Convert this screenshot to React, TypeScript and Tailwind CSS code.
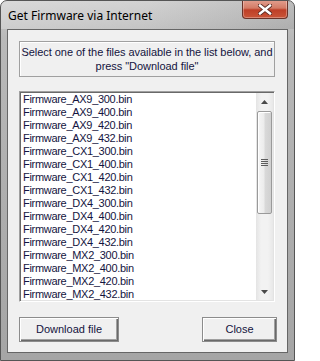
import React from "react"

const files = [
    "Firmware_AX9_300.bin",
    "Firmware_AX9_400.bin",
    "Firmware_AX9_420.bin",
    "Firmware_AX9_432.bin",
    "Firmware_CX1_300.bin",
    "Firmware_CX1_400.bin",
    "Firmware_CX1_420.bin",
    "Firmware_CX1_432.bin",
    "Firmware_DX4_300.bin",
    "Firmware_DX4_400.bin",
    "Firmware_DX4_420.bin",
    "Firmware_DX4_432.bin",
    "Firmware_MX2_300.bin",
    "Firmware_MX2_400.bin",
    "Firmware_MX2_420.bin",
    "Firmware_MX2_432.bin",
]

const ui = { fontFamily: '"Liberation Sans", Arial, sans-serif' }

function CloseGlyph() {
    return (
        <svg width="14" height="11" viewBox="0 0 14 11">
            <path d="M2 1.5 L12 9.5 M12 1.5 L2 9.5" stroke="#5a2a22" strokeWidth="4.2" strokeLinecap="square" />
            <path d="M2 1.5 L12 9.5 M12 1.5 L2 9.5" stroke="#ffffff" strokeWidth="2.4" strokeLinecap="square" />
        </svg>
    )
}

function Arrow({ down }: { down?: boolean }) {
    return (
        <svg width="7" height="4" viewBox="0 0 7 4">
            <path d={down ? "M0 0 H7 L3.5 4 Z" : "M0 4 H7 L3.5 0 Z"} fill="#4a4a4a" />
        </svg>
    )
}

function ClassicButton({ label, width }: { label: string; width: string }) {
    return (
        <button
            className={`${width} h-[25px] border border-[#8c8c8c] bg-[#f0f0f0] text-[11px] text-[#141440] shadow-[inset_1px_1px_0_#ffffff,inset_-1px_-1px_0_#696969,inset_-2px_-2px_0_#a0a0a0]`}
            style={ui}
        >
            {label}
        </button>
    )
}

export default function App() {
    return (
        <div className="w-[295px] h-[361px] flex flex-col rounded-t-[7px] border border-[#555555] bg-[linear-gradient(180deg,#cdcdcd_0%,#b9b9b9_10%,#adadad_60%,#a5a5a5_100%)] overflow-hidden">
            {/* title bar */}
            <div className="h-[28px] flex items-start justify-between bg-[linear-gradient(90deg,rgba(255,255,255,0.25)_0%,rgba(255,255,255,0.1)_50%,rgba(0,0,0,0.08)_100%)]">
                <div className="pl-[7px] pt-[7px] text-[12px] leading-[16px] text-black" style={{ fontFamily: '"Noto Sans", "Open Sans", sans-serif' }}>
                    Get Firmware via Internet
                </div>
                <div className="-mt-[1px] mr-[6px] w-[46px] h-[19px] flex items-center justify-center rounded-b-[4px] border border-t-0 border-[#6a3329] bg-[linear-gradient(180deg,#e3a090_0%,#d37b66_45%,#be3f27_55%,#ca5538_100%)] shadow-[inset_0_0_0_1px_rgba(255,255,255,0.3)]">
                    <CloseGlyph />
                </div>
            </div>

            {/* client area */}
            <div className="flex-1 mx-[6px] mb-[7px] border border-[#666666] bg-[#f0f0f0] flex flex-col pl-[11px] pr-[12px] pt-[11px]" style={ui}>
                <div className="h-[36px] border border-[#a0a0a0] shadow-[inset_1px_1px_0_#ffffff] flex flex-col items-center justify-center text-[11px] leading-[14px] tracking-[-0.05px] text-[#141440]">
                    <div>Select one of the files available in the list below, and</div>
                    <div>press "Download file"</div>
                </div>

                <div className="mt-[14px] h-[211px] flex border-t border-l border-[#a0a0a0] border-b border-r border-b-white border-r-white bg-white shadow-[inset_1px_1px_0_#696969,inset_-1px_-1px_0_#e3e3e3] p-[1px]">
                    <div className="flex-1 pl-[2px] overflow-hidden">
                        {files.map((f) => (
                            <div key={f} className="h-[13px] text-[11px] leading-[13px] tracking-[-0.3px] text-[#141440] whitespace-nowrap">
                                {f}
                            </div>
                        ))}
                    </div>
                    <div className="w-[17px] flex flex-col bg-[linear-gradient(90deg,#e4e4e4_0%,#f2f2f2_30%,#f2f2f2_70%,#e8e8e8_100%)]">
                        <div className="h-[17px] flex items-center justify-center">
                            <Arrow />
                        </div>
                        <div className="mt-[1px] h-[103px] mx-[1px] rounded-[2px] border border-[#9a9a9a] bg-[linear-gradient(90deg,#f6f6f6_0%,#ececec_45%,#d9d9d9_55%,#d0d0d0_100%)] shadow-[inset_1px_1px_0_#ffffff] flex flex-col items-center justify-center gap-[1px]">
                            <div className="w-[7px] h-[1px] bg-[#5c5c5c]" />
                            <div className="w-[7px] h-[1px] bg-[#5c5c5c]" />
                            <div className="w-[7px] h-[1px] bg-[#5c5c5c]" />
                            <div className="w-[7px] h-[1px] bg-[#5c5c5c]" />
                        </div>
                        <div className="flex-1" />
                        <div className="h-[17px] flex items-center justify-center">
                            <Arrow down />
                        </div>
                    </div>
                </div>

                <div className="mt-[15px] -mr-[2px] flex justify-between">
                    <ClassicButton label="Download file" width="w-[100px]" />
                    <ClassicButton label="Close" width="w-[75px]" />
                </div>
            </div>
        </div>
    )
}
